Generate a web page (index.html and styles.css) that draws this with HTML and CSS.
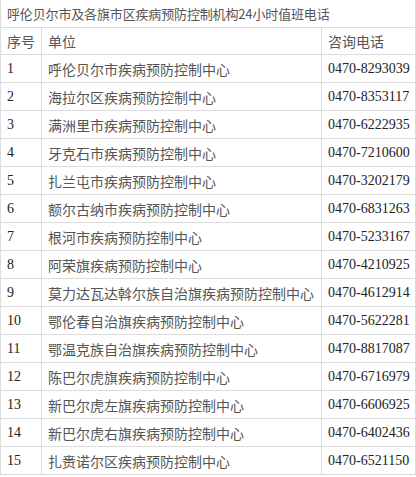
FILE: index.html
```html
<!DOCTYPE html>
<html lang="zh-CN">
<head>
<meta charset="utf-8">
<title>呼伦贝尔市及各旗市区疾病预防控制机构24小时值班电话</title>
<link rel="stylesheet" href="styles.css">
</head>
<body>
<table class="tbl">
  <colgroup>
    <col class="c-no">
    <col class="c-name">
    <col class="c-tel">
  </colgroup>
  <thead>
    <tr class="title-row"><th colspan="3" class="title">呼伦贝尔市及各旗市区疾病预防控制机构24小时值班电话</th></tr>
    <tr class="head-row"><th class="first">序号</th><th>单位</th><th>咨询电话</th></tr>
  </thead>
  <tbody>
    <tr><td class="first">1</td><td class="cn">呼伦贝尔市疾病预防控制中心</td><td>0470-8293039</td></tr>
    <tr><td class="first">2</td><td class="cn">海拉尔区疾病预防控制中心</td><td>0470-8353117</td></tr>
    <tr><td class="first">3</td><td class="cn">满洲里市疾病预防控制中心</td><td>0470-6222935</td></tr>
    <tr><td class="first">4</td><td class="cn">牙克石市疾病预防控制中心</td><td>0470-7210600</td></tr>
    <tr><td class="first">5</td><td class="cn">扎兰屯市疾病预防控制中心</td><td>0470-3202179</td></tr>
    <tr><td class="first">6</td><td class="cn">额尔古纳市疾病预防控制中心</td><td>0470-6831263</td></tr>
    <tr><td class="first">7</td><td class="cn">根河市疾病预防控制中心</td><td>0470-5233167</td></tr>
    <tr><td class="first">8</td><td class="cn">阿荣旗疾病预防控制中心</td><td>0470-4210925</td></tr>
    <tr><td class="first">9</td><td class="cn">莫力达瓦达斡尔族自治旗疾病预防控制中心</td><td>0470-4612914</td></tr>
    <tr><td class="first">10</td><td class="cn">鄂伦春自治旗疾病预防控制中心</td><td>0470-5622281</td></tr>
    <tr><td class="first">11</td><td class="cn">鄂温克族自治旗疾病预防控制中心</td><td>0470-8817087</td></tr>
    <tr><td class="first">12</td><td class="cn">陈巴尔虎旗疾病预防控制中心</td><td>0470-6716979</td></tr>
    <tr><td class="first">13</td><td class="cn">新巴尔虎左旗疾病预防控制中心</td><td>0470-6606925</td></tr>
    <tr><td class="first">14</td><td class="cn">新巴尔虎右旗疾病预防控制中心</td><td>0470-6402436</td></tr>
    <tr><td class="first">15</td><td class="cn">扎赉诺尔区疾病预防控制中心</td><td>0470-6521150</td></tr>
  </tbody>
</table>
</body>
</html>
```
FILE: styles.css
```css
html, body {
  margin: 0;
  padding: 0;
  background: #fff;
}

.tbl {
  width: 416px;
  table-layout: fixed;
  border-collapse: separate;
  border-spacing: 0;
  font-family: "Liberation Serif", "Noto Sans CJK SC", serif;
  font-size: 14px;
  color: #222;
}

.c-no { width: 42px; }
.c-name { width: 280px; }
.c-tel { width: 94px; }

.tbl th,
.tbl td {
  padding: 0 0 0 6px;
  border-right: 1px solid #dcdcdc;
  border-bottom: 1px solid #dcdcdc;
  text-align: left;
  font-weight: normal;
  vertical-align: middle;
  white-space: nowrap;
  line-height: 16px;
}

.tbl .first,
.tbl .title {
  border-left: 1px solid #dcdcdc;
}

.title-row { height: 28px; }
.head-row { height: 27px; }
.tbl tbody tr { height: 28px; }

.tbl .title {
  font-family: "Noto Sans CJK SC", sans-serif;
  font-size: 13px;
  letter-spacing: -0.15px;
  color: #555;
}

.head-row th {
  font-family: "Noto Sans CJK SC", sans-serif;
  color: #555;
}

.tbl .cn {
  font-family: "Noto Sans CJK SC", sans-serif;
  color: #555;
}
```
